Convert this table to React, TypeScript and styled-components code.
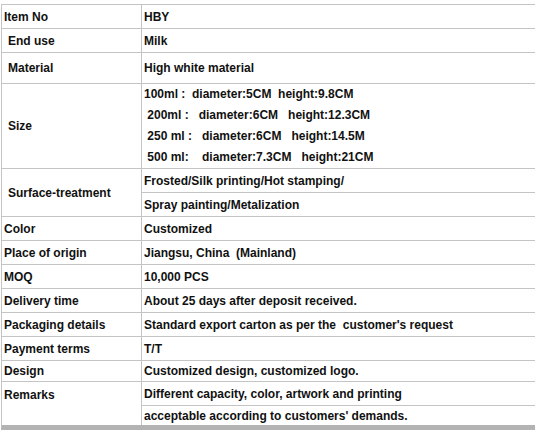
import React from "react";
import styled, { createGlobalStyle } from "styled-components";

const Global = createGlobalStyle`
  html, body { margin: 0; padding: 0; background: #ffffff; }
  body { font-family: "Liberation Sans", Arial, sans-serif; }
`;

const Sheet = styled.div`
  width: 535px;
  height: 433px;
  overflow: hidden;
  padding-top: 4px;
  box-sizing: border-box;
`;

const Table = styled.div`
  margin-left: 1px;
  width: 600px;
  border-top: 1px solid #c4c4c4;
  border-left: 1px solid #c4c4c4;
  border-bottom: 5px solid #b3b3b3;
  font-family: "Liberation Sans", Arial, sans-serif;
  font-weight: bold;
  font-size: 12px;
  color: #111111;
`;

const Row = styled.div<{ $h: number; $last?: boolean }>`
  display: grid;
  grid-template-columns: 140px 1fr;
  box-sizing: border-box;
  height: ${(p) => p.$h}px;
  border-bottom: ${(p) => (p.$last ? "none" : "1px solid #c4c4c4")};
`;

const Label = styled.div<{ $indent: number; $top?: boolean }>`
  display: flex;
  align-items: ${(p) => (p.$top ? "flex-start" : "center")};
  padding-left: ${(p) => p.$indent}px;
  padding-top: ${(p) => (p.$top ? 6 : 0)}px;
  box-sizing: border-box;
  border-right: 1px solid #c4c4c4;
  white-space: pre;
`;

const Value = styled.div`
  display: flex;
  align-items: center;
  padding-left: 2px;
  white-space: pre;
`;

const Lines = styled.div`
  display: flex;
  flex-direction: column;
  justify-content: center;
  padding-left: 2px;
  line-height: 21px;
  white-space: pre;
`;

const Split = styled.div`
  display: flex;
  flex-direction: column;
`;

const Sub = styled.div<{ $h: number; $line?: boolean }>`
  display: flex;
  align-items: center;
  box-sizing: border-box;
  height: ${(p) => p.$h}px;
  padding-left: 2px;
  white-space: pre;
  border-bottom: ${(p) => (p.$line ? "1px solid #c4c4c4" : "none")};
`;

type Simple = { label: string; value: string; h: number; indent: number };

const top: Simple[] = [
  { label: "Item No", value: "HBY", h: 24, indent: 2 },
  { label: "End use", value: "Milk", h: 24, indent: 6 },
  { label: "Material", value: "High white material", h: 31, indent: 6 },
];

const middle: Simple[] = [
  { label: "Color", value: "Customized", h: 24, indent: 2 },
  { label: "Place of origin", value: "Jiangsu, China  (Mainland)", h: 24, indent: 2 },
  { label: "MOQ", value: "10,000 PCS", h: 24, indent: 2 },
  { label: "Delivery time", value: "About 25 days after deposit received.", h: 24, indent: 2 },
  { label: "Packaging details", value: "Standard export carton as per the  customer's request", h: 24, indent: 2 },
  { label: "Payment terms", value: "T/T", h: 24, indent: 2 },
  { label: "Design", value: "Customized design, customized logo.", h: 21, indent: 2 },
];

const sizes = [
  "100ml :  diameter:5CM  height:9.8CM",
  " 200ml :   diameter:6CM   height:12.3CM",
  " 250 ml :   diameter:6CM   height:14.5M",
  " 500 ml:    diameter:7.3CM   height:21CM",
];

export default function App() {
  return (
    <Sheet>
      <Global />
      <Table>
        {top.map((r) => (
          <Row key={r.label} $h={r.h}>
            <Label $indent={r.indent}>{r.label}</Label>
            <Value>{r.value}</Value>
          </Row>
        ))}
        <Row $h={85}>
          <Label $indent={6}>Size</Label>
          <Lines>
            {sizes.map((s) => (
              <div key={s}>{s}</div>
            ))}
          </Lines>
        </Row>
        <Row $h={48}>
          <Label $indent={6}>Surface-treatment</Label>
          <Split>
            <Sub $h={24} $line>
              Frosted/Silk printing/Hot stamping/
            </Sub>
            <Sub $h={23}>Spray painting/Metalization</Sub>
          </Split>
        </Row>
        {middle.map((r) => (
          <Row key={r.label} $h={r.h}>
            <Label $indent={r.indent}>{r.label}</Label>
            <Value>{r.value}</Value>
          </Row>
        ))}
        <Row $h={43} $last>
          <Label $indent={2} $top>
            Remarks
          </Label>
          <Split>
            <Sub $h={24} $line>
              Different capacity, color, artwork and printing
            </Sub>
            <Sub $h={19}>acceptable according to customers' demands.</Sub>
          </Split>
        </Row>
      </Table>
    </Sheet>
  );
}
